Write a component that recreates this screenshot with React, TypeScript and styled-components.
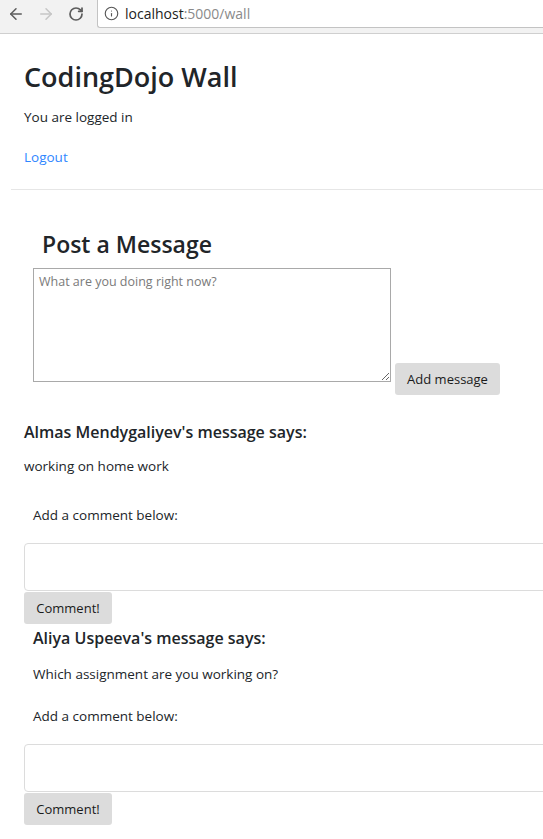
import React from "react";
import styled, { createGlobalStyle } from "styled-components";
import { ArrowLeft, ArrowRight, RotateCw, Info } from "lucide-react";

const Global = createGlobalStyle`
  html, body { margin: 0; padding: 0; background: #fff; overflow-x: hidden; }
  body { font-family: "Open Sans", "Noto Sans", sans-serif; color: #212529; }
  * { box-sizing: border-box; }
`;

const BrowserBar = styled.div`
  height: 34px;
  background: #f2f2f2;
  border-bottom: 1px solid #cfcfcf;
  display: flex;
  align-items: flex-start;
`;

const NavIcons = styled.div`
  display: flex;
  align-items: center;
  height: 27px;
  padding-left: 6px;
  gap: 10px;
`;

const NavButton = styled.span<{ $dim?: boolean }>`
  display: flex;
  width: 19px;
  justify-content: center;
  color: ${(p) => (p.$dim ? "#c6c6c6" : "#5c5c5c")};
  margin-right: 1px;
`;

const AddressBox = styled.div`
  margin-left: 11px;
  flex: 1;
  height: 28px;
  background: #fff;
  border: 1px solid #c3c3c3;
  border-top: none;
  border-right: none;
  border-bottom-left-radius: 3px;
  display: flex;
  align-items: center;
  padding-left: 6px;
  gap: 6px;
  font-size: 14px;
  color: #333;
`;

const Host = styled.span`
  color: #222;
`;
const Rest = styled.span`
  color: #8a8a8a;
`;

const Header = styled.header`
  padding: 27px 0 0 24px;
`;

const Title = styled.h1`
  margin: 0;
  font-size: 27px;
  font-weight: 600;
  line-height: 32px;
`;

const Line = styled.p<{ $indent?: number; $top: number }>`
  margin: ${(p) => p.$top}px 0 0 ${(p) => p.$indent ?? 0}px;
  font-size: 13.5px;
  line-height: 20px;
`;

const LogoutLink = styled.a`
  display: block;
  margin-top: 20px;
  font-size: 13.5px;
  line-height: 20px;
  color: #2f86ff;
  text-decoration: none;
`;

const Rule = styled.hr`
  margin: 22px 0 0 11px;
  border: 0;
  border-top: 1px solid #e6e6e6;
`;

const PostTitle = styled.h2`
  margin: 40px 0 0 42px;
  font-size: 23px;
  font-weight: 600;
  line-height: 28px;
`;

const PostRow = styled.form`
  display: flex;
  align-items: flex-end;
  margin: 10px 0 0 33px;
`;

const MessageArea = styled.textarea`
  width: 358px;
  height: 114px;
  margin: 0 0 13px 0;
  border: 1px solid #a9a9a9;
  padding: 4px 5px;
  font-family: inherit;
  font-size: 12.5px;
  line-height: 18px;
  resize: both;
  &::placeholder { color: #7a7a7a; }
`;

const GreyButton = styled.button<{ $w: number; $h: number }>`
  width: ${(p) => p.$w}px;
  height: ${(p) => p.$h}px;
  background: #dcdcdc;
  border: none;
  border-radius: 3px;
  font-family: inherit;
  font-size: 13px;
  color: #1a1a1a;
  padding: 0;
  cursor: pointer;
`;

const AddButton = styled(GreyButton)`
  margin-left: 4px;
`;

const Message = styled.section<{ $top: number }>`
  margin-top: ${(p) => p.$top}px;
  padding-left: 24px;
`;

const MessageTitle = styled.h3<{ $indent: number }>`
  margin: 0 0 0 ${(p) => p.$indent}px;
  font-size: 16px;
  font-weight: 600;
  line-height: 24px;
`;

const CommentInput = styled.input<{ $h: number }>`
  display: block;
  margin-top: 18px;
  width: 640px;
  height: ${(p) => p.$h}px;
  border: 1px solid #dcdcdc;
  border-radius: 4px;
  font-family: inherit;
`;

const CommentButton = styled(GreyButton)`
  display: block;
  margin-top: 1px;
`;

type Msg = { author: string; text: string; indent: number; top: number; textTop: number; labelTop: number; inputH: number };

const messages: Msg[] = [
  { author: "Almas Mendygaliyev's", text: "working on home work", indent: 0, top: 25, textTop: 12, labelTop: 29, inputH: 48 },
  { author: "Aliya Uspeeva's", text: "Which assignment are you working on?", indent: 9, top: 2, textTop: 14, labelTop: 22, inputH: 48 },
];

export default function App() {
  return (
    <>
      <Global />
      <BrowserBar>
        <NavIcons>
          <NavButton><ArrowLeft size={18} strokeWidth={2} /></NavButton>
          <NavButton $dim><ArrowRight size={18} strokeWidth={2} /></NavButton>
          <NavButton><RotateCw size={16} strokeWidth={2.6} /></NavButton>
        </NavIcons>
        <AddressBox>
          <Info size={15} strokeWidth={1.8} color="#555" />
          <span>
            <Host>localhost</Host>
            <Rest>:5000/wall</Rest>
          </span>
        </AddressBox>
      </BrowserBar>
      <Header>
        <Title>CodingDojo Wall</Title>
        <Line $top={14}>You are logged in</Line>
        <LogoutLink href="#">Logout</LogoutLink>
      </Header>
      <Rule />
      <PostTitle>Post a Message</PostTitle>
      <PostRow onSubmit={(e) => e.preventDefault()}>
        <MessageArea placeholder="What are you doing right now?" />
        <AddButton $w={105} $h={32} type="submit">Add message</AddButton>
      </PostRow>
      {messages.map((m) => (
        <Message key={m.author} $top={m.top}>
          <MessageTitle $indent={m.indent}>{m.author} message says:</MessageTitle>
          <Line $top={m.textTop} $indent={m.indent}>{m.text}</Line>
          <Line $top={m.labelTop} $indent={9}>Add a comment below:</Line>
          <CommentInput $h={m.inputH} />
          <CommentButton $w={88} $h={32} type="button">Comment!</CommentButton>
        </Message>
      ))}
    </>
  );
}
